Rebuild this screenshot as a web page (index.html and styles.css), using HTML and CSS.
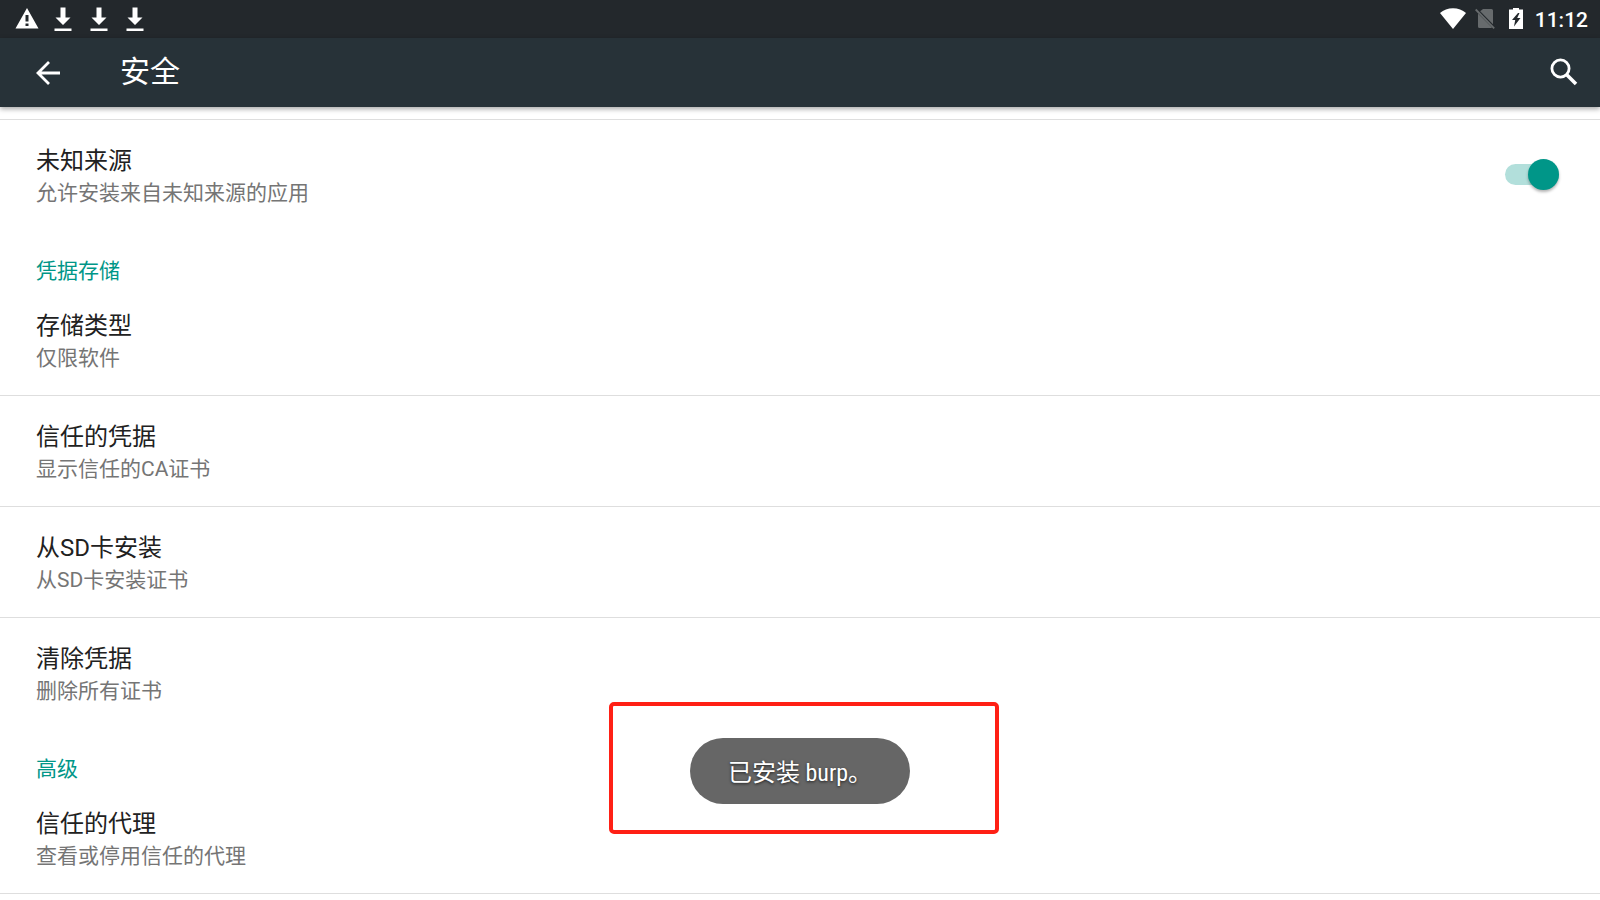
FILE: index.html
```
<!DOCTYPE html>
<html lang="zh-CN">
<head>
<meta charset="utf-8">
<meta name="viewport" content="width=device-width, initial-scale=1">
<title>安全</title>
<link rel="stylesheet" href="styles.css">
</head>
<body>
<div class="status-bar">
  <div class="notifications">
    <svg width="24" height="22" viewBox="0 0 24 22" aria-hidden="true"><path fill="#fff" fill-rule="evenodd" d="M12 0 23.500 20.500H.5ZM10.500 7v6.500h3V7Zm0 8.500v2.500h3v-2.500Z"/></svg>
    <svg width="18" height="24" viewBox="0 0 18 24" aria-hidden="true"><path fill="#fff" d="M6.500.500h5v10h5L9 18 1.500 10.500h5ZM.5 21.500h17v2.500H.5Z"/></svg>
    <svg width="18" height="24" viewBox="0 0 18 24" aria-hidden="true"><path fill="#fff" d="M6.500.500h5v10h5L9 18 1.500 10.500h5ZM.5 21.500h17v2.500H.5Z"/></svg>
    <svg width="18" height="24" viewBox="0 0 18 24" aria-hidden="true"><path fill="#fff" d="M6.500.500h5v10h5L9 18 1.500 10.500h5ZM.5 21.500h17v2.500H.5Z"/></svg>
  </div>
  <div class="indicators">
    <svg width="26" height="22" viewBox="0 0 26 22" aria-hidden="true"><path fill="#fff" d="M13 21 0 5C3.500 2 8 .3 13 .3S22.500 2 26 5Z"/></svg>
    <svg class="sim" width="20" height="22" viewBox="0 0 20 22" aria-hidden="true"><path fill="#676b6d" d="M8 1h8.500q1.500 0 1.500 1.500v13.700L5.200 3.300ZM3 5.500 17 19.600q-.3.400-1 .4H4.500Q3 20 3 18.500Z"/><path stroke="#676b6d" stroke-width="1.800" d="M.7 1.500 19.200 20.400"/></svg>
    <svg class="battery" width="14" height="22" viewBox="0 0 14 22" aria-hidden="true"><path fill="#fff" fill-rule="evenodd" d="M4 0h6v1.500h4V21H0V1.500h4ZM9 5 3 12h3.200L5 18.500l6.500-8.500H8.200L10.500 5Z"/></svg>
    <time class="clock">11:12</time>
  </div>
</div>
<header class="app-bar">
  <button class="icon-button" type="button" aria-label="返回">
    <svg width="24" height="24" viewBox="0 0 24 24" aria-hidden="true"><path fill="none" stroke="#fff" stroke-width="2.800" d="M24 12H2M13 1 2 12l11 11"/></svg>
  </button>
  <h1 class="page-title">安全</h1>
  <button class="icon-button search" type="button" aria-label="搜索">
    <svg width="28" height="28" viewBox="0 0 28 28" aria-hidden="true"><g fill="none" stroke="#fff"><circle cx="10.500" cy="10.500" r="8.600" stroke-width="2.800"/><path stroke-width="3.600" d="m17 17 9 9"/></g></svg>
  </button>
</header>
<main class="settings">
  <label class="row switch-row">
    <span class="row-text"><span class="row-title">未知来源</span><span class="row-summary">允许安装来自未知来源的应用</span></span>
    <input class="switch" type="checkbox" role="switch" checked>
  </label>
  <section>
    <h2 class="category">凭据存储</h2>
    <button class="row" type="button"><span class="row-title">存储类型</span><span class="row-summary">仅限软件</span></button>
    <button class="row divided" type="button"><span class="row-title">信任的凭据</span><span class="row-summary">显示信任的CA证书</span></button>
    <button class="row divided" type="button"><span class="row-title">从SD卡安装</span><span class="row-summary">从SD卡安装证书</span></button>
    <button class="row divided" type="button"><span class="row-title">清除凭据</span><span class="row-summary">删除所有证书</span></button>
  </section>
  <section class="last">
    <h2 class="category">高级</h2>
    <button class="row" type="button"><span class="row-title">信任的代理</span><span class="row-summary">查看或停用信任的代理</span></button>
  </section>
</main>
<div class="highlight"></div>
<div class="toast" role="status">已安装 burp。</div>
</body>
</html>
```
FILE: styles.css
```
* {
  box-sizing: border-box;
}

body {
  margin: 0;
  background: #fff;
  color: #212121;
  font-family: Roboto, "Noto Sans CJK SC", sans-serif;
}

button {
  margin: 0;
  border: 0;
  background: none;
  color: inherit;
  font: inherit;
  cursor: pointer;
}

svg {
  display: block;
  flex: none;
}

.status-bar {
  display: flex;
  justify-content: space-between;
  align-items: center;
  height: 38px;
  padding: 0 12px 0 15px;
  background: #23282c;
}

.notifications {
  display: flex;
  align-items: center;
  gap: 18px;
}

.notifications svg:first-child {
  margin-right: -3px;
}

.indicators {
  display: flex;
  align-items: center;
}

.sim {
  margin-left: 9px;
}

.battery {
  margin: 0 12px 0 14px;
}

.clock {
  padding-top: 2px;
  color: #fff;
  font-size: 21px;
  font-weight: 500;
  line-height: 36px;
}

.app-bar {
  position: relative;
  display: flex;
  align-items: center;
  height: 69px;
  padding: 0 22px 0 36px;
  background: #273238;
  box-shadow: 0 2px 5px rgba(0, 0, 0, 0.35);
}

.icon-button {
  padding: 0;
}

.search {
  padding-bottom: 2px;
}

.page-title {
  margin: 0 auto 0 60px;
  padding-bottom: 2px;
  color: #fff;
  font-size: 30px;
  font-weight: 400;
  line-height: 40px;
}

.settings {
  padding-top: 12px;
}

.row {
  display: block;
  width: 100%;
  padding: 25px 36px 21px;
  text-align: left;
}

.switch-row {
  display: flex;
  justify-content: space-between;
  align-items: center;
  padding-right: 41px;
  border-top: 1px solid #dedede;
  cursor: pointer;
}

.divided {
  border-top: 1px solid #dedede;
}

.row-title,
.row-summary {
  display: block;
  line-height: 32px;
}

.row-title {
  font-size: 24px;
}

.row-summary {
  color: #757575;
  font-size: 21px;
}

.category {
  margin: 0;
  padding: 27px 36px 0;
  color: #009688;
  font-size: 21px;
  font-weight: 400;
  line-height: 28px;
}

.last {
  border-bottom: 1px solid #dedede;
}

.switch {
  position: relative;
  flex: none;
  width: 54px;
  height: 21px;
  margin: 0 0 6px;
  border-radius: 11px;
  background: #b2dfdb;
  appearance: none;
  cursor: pointer;
}

.switch::before {
  content: "";
  position: absolute;
  top: -5px;
  right: 0;
  width: 31px;
  height: 31px;
  border-radius: 50%;
  background: #009688;
  box-shadow: 0 2px 3px rgba(0, 0, 0, 0.3);
}

.switch:not(:checked)::before {
  right: auto;
  left: 0;
  background: #f1f1f1;
}

.highlight {
  position: fixed;
  bottom: 66px;
  left: calc(50% - 191px);
  width: 390px;
  height: 132px;
  border: 4px solid #ff2015;
  border-radius: 5px;
  pointer-events: none;
}

.toast {
  position: fixed;
  bottom: 96px;
  left: calc(50% - 110px);
  width: 220px;
  padding: 19px 38px 15px;
  border-radius: 33px;
  background: #666;
  color: #fff;
  font-family: "Roboto Condensed", Roboto, "Noto Sans CJK SC", sans-serif;
  font-size: 24px;
  line-height: 32px;
  text-shadow: 0 1px 3px rgba(0, 0, 0, 0.7);
  white-space: nowrap;
}
```
